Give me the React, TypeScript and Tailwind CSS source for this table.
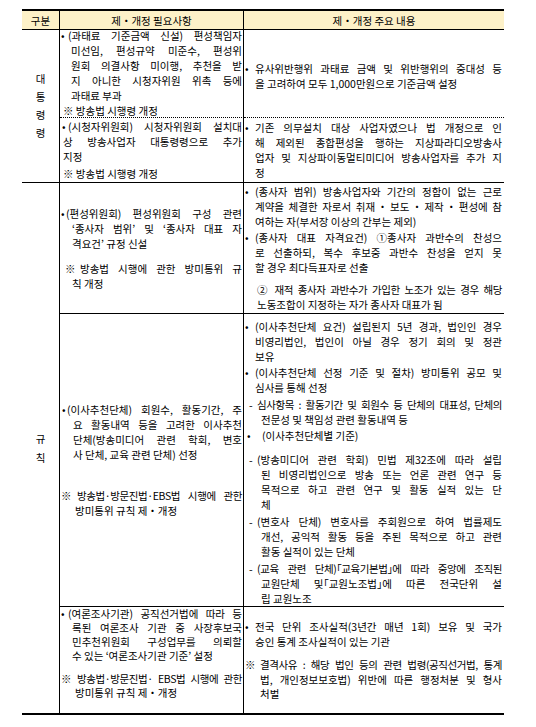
import clsx from "clsx";

type ParaProps = {
  lines: React.ReactNode[];
  mark?: string;
  first?: string;
  markW?: string;
  rest?: string;
  className?: string;
  tight?: number[];
};

// one paragraph, broken into the same lines as the printed table
const Para = ({ lines, mark, first = "", markW = "", rest = "", className = "", tight = [] }: ParaProps) => (
  <div className={className}>
    {lines.map((line, i) => (
      <div
        key={i}
        className={clsx(
          "whitespace-nowrap",
          i < lines.length - 1 && "[text-align-last:justify]",
          i === 0 ? first : rest,
          tight.includes(i) && "tracking-[-0.4px]"
        )}
      >
        {i === 0 && mark && <span className={clsx("inline-block", markW)}>{mark}</span>}
        {line}
      </div>
    ))}
  </div>
);

const Bullet = ({ lines, className, tight }: { lines: React.ReactNode[]; className?: string; tight?: number[] }) => (
  <Para lines={lines} mark="•" markW="w-[10px]" rest="pl-[10px]" className={className} tight={tight} />
);

const Dash = ({ lines, className, tight }: { lines: React.ReactNode[]; className?: string; tight?: number[] }) => (
  <Para lines={lines} mark="-" first="pl-[4px]" markW="w-[8px]" rest="pl-[16px]" className={className} tight={tight} />
);

const App = () => {
  return (
    <div className="min-h-screen bg-white pt-[9px] pl-[22px] text-[10.5px] leading-[15px] text-black font-['Noto_Sans_CJK_KR','Noto_Sans',sans-serif]">
      <div className="grid w-[482px] grid-cols-[38px_184px_260px] grid-rows-[21px_88px_65px_131px_293px_108px]">
        {/* 머리행 */}
        <div className="flex items-center justify-center border-t-2 border-r border-b border-black bg-[#fdf1c8]">구분</div>
        <div className="flex items-center justify-center border-t-2 border-r border-b border-black bg-[#fdf1c8]">제・개정 필요사항</div>
        <div className="flex items-center justify-center border-t-2 border-b border-black bg-[#fdf1c8]">제・개정 주요 내용</div>

        {/* 대통령령 */}
        <div className="row-span-2 flex flex-col items-center justify-center border-r border-b border-black leading-[18px]">
          <span>대</span>
          <span>통</span>
          <span>령</span>
          <span>령</span>
        </div>
        <div className="flex flex-col justify-center border-r border-b border-black [border-bottom-style:dotted]! px-[1px] pb-[2px]">
          <Para
            mark="•"
            markW="w-[7px]"
            rest="pl-[10px]"
            lines={[
              "(과태료 기준금액 신설) 편성책임자",
              "미선임, 편성규약 미준수, 편성위",
              "원회 의결사항 미이행, 추천을 받",
              "지 아니한 시청자위원 위촉 등에",
              "과태료 부과",
            ]}
          />
          <div className="pl-[2px]">※ 방송법 시행령 개정</div>
        </div>
        <div className="flex flex-col justify-center border-b border-black [border-bottom-style:dotted]! pt-[4px] pl-[1px] pr-[2px]">
          <Bullet lines={["유사위반행위 과태료 금액 및 위반행위의 중대성 등", "을 고려하여 모두 1,000만원으로 기준금액 설정"]} />
        </div>

        <div className="flex flex-col justify-center border-r border-b border-black px-[1px]">
          <Para
            mark="•"
            first="pl-[1px]"
            markW="w-[6px]"
            rest="pl-[2px]"
            lines={["(시청자위원회) 시청자위원회 설치대", "상 방송사업자 대통령령으로 추가", "지정"]}
          />
          <div className="mt-[2px] pl-[2px]">※ 방송법 시행령 개정</div>
        </div>
        <div className="flex flex-col justify-center border-b border-black pl-[1px] pr-[2px]">
          <Bullet
            lines={[
              "기존 의무설치 대상 사업자였으나 법 개정으로 인",
              "해 제외된 종합편성을 행하는 지상파라디오방송사",
              "업자 및 지상파이동멀티미디어 방송사업자를 추가 지",
              "정",
            ]}
          />
        </div>

        {/* 규칙 */}
        <div className="row-span-3 flex flex-col items-center justify-center border-r border-b-2 border-black leading-[19px]">
          <span>규</span>
          <span>칙</span>
        </div>
        <div className="flex flex-col justify-center border-r border-b border-black px-[1px]">
          <Para
            mark="•"
            markW="w-[5px]"
            rest="pl-[11px]"
            lines={["(편성위원회) 편성위원회 구성 관련", "‘종사자 범위’ 및 ‘종사자 대표 자", "격요건’ 규정 신설"]}
          />
          <Para
            className="mt-[10px]"
            mark="※"
            first="pl-[4px]"
            markW="w-[15px]"
            rest="pl-[11px]"
            lines={["방송법 시행에 관한 방미통위 규", "칙 개정"]}
          />
        </div>
        <div className="flex flex-col justify-center border-b border-black pl-[1px] pr-[2px]">
          <Bullet
            lines={[
              "(종사자 범위) 방송사업자와 기간의 정함이 없는 근로",
              "계약을 체결한 자로서 취재・보도・제작・편성에 참",
              "여하는 자(부서장 이상의 간부는 제외)",
            ]}
          />
          <Bullet
            className="mt-[1px]"
            lines={[
              <>
                (종사자 대표 자격요건) <span className="inline-block">①종사자</span> 과반수의 찬성으
              </>,
              "로 선출하되, 복수 후보중 과반수 찬성을 얻지 못",
              "할 경우 최다득표자로 선출",
            ]}
          />
          <Para
            className="mt-[7px]"
            first="pl-[12px]"
            rest="pl-[12px]"
            tight={[0]}
            lines={["②  재적 종사자 과반수가 가입한 노조가 있는 경우 해당", "노동조합이 지정하는 자가 종사자 대표가 됨"]}
          />
        </div>

        <div className="flex flex-col justify-center border-r border-b border-black px-[1px]">
          <Para
            mark="•"
            first="pl-[1px]"
            markW="w-[5px]"
            rest="pl-[12px]"
            lines={[
              "(이사추천단체) 회원수, 활동기간, 주",
              "요 활동내역 등을 고려한 이사추천",
              "단체(방송미디어 관련 학회, 변호",
              "사 단체, 교육 관련 단체) 선정",
            ]}
          />
          <Para
            className="mt-[26px]"
            mark="※"
            markW="w-[16px]"
            rest="pl-[14px]"
            tight={[0]}
            lines={["방송법·방문진법·EBS법 시행에 관한", "방미통위 규칙 제・개정"]}
          />
        </div>
        <div className="flex flex-col border-b border-black pt-[5px] pl-[1px] pr-[2px]">
          <Bullet
            lines={[
              "(이사추천단체 요건) 설립된지 5년 경과, 법인인 경우",
              "비영리법인, 법인이 아닐 경우 정기 회의 및 정관",
              "보유",
            ]}
          />
          <Bullet className="mt-[1px]" lines={["(이사추천단체 선정 기준 및 절차) 방미통위 공모 및", "심사를 통해 선정"]} />
          <Dash
            className="mt-[2px]"
            tight={[0]}
            lines={["심사항목 : 활동기간 및 회원수 등 단체의 대표성, 단체의", "전문성 및 책임성 관련 활동내역 등"]}
          />
          <Para className="mt-[1px]" mark="•" first="pl-[2px]" markW="w-[15px]" lines={["(이사추천단체별 기준)"]} />
          <Dash
            className="mt-[9px]"
            lines={[
              "(방송미디어 관련 학회) 민법 제32조에 따라 설립",
              "된 비영리법인으로 방송 또는 언론 관련 연구 등",
              "목적으로 하고 관련 연구 및 활동 실적 있는 단",
              "체",
            ]}
          />
          <Dash
            className="mt-[2px]"
            lines={[
              "(변호사 단체) 변호사를 주회원으로 하여 법률제도",
              "개선, 공익적 활동 등을 주된 목적으로 하고 관련",
              "활동 실적이 있는 단체",
            ]}
          />
          <Dash
            className="mt-[2px]"
            tight={[0]}
            lines={[
              <>
                (교육 관련 단체)<span className="inline-block">｢교육기본법｣에</span> 따라 중앙에 조직된
              </>,
              <>
                교원단체 <span className="inline-block">및｢교원노조법｣에</span> 따른 전국단위 설
              </>,
              "립 교원노조",
            ]}
          />
        </div>

        <div className="flex flex-col border-r border-b-2 border-black px-[1px] leading-[14px]">
          <Para
            mark="•"
            markW="w-[7px]"
            rest="pl-[11px]"
            lines={[
              "(여론조사기관) 공직선거법에 따라 등",
              "록된 여론조사 기관 중 사장후보국",
              "민추천위원회 구성업무를 의뢰할",
              "수 있는 ‘여론조사기관 기준’ 설정",
            ]}
          />
          <Para
            className="mt-[9px]"
            mark="※"
            markW="w-[16px]"
            rest="pl-[14px]"
            tight={[0]}
            lines={["방송법·방문진법· EBS법 시행에 관한", "방미통위 규칙 제・개정"]}
          />
        </div>
        <div className="flex flex-col border-b-2 border-black pt-[13px] pl-[1px] pr-[2px] leading-[14.5px]">
          <Bullet lines={["전국 단위 조사실적(3년간 매년 1회) 보유 및 국가", "승인 통계 조사실적이 있는 기관"]} />
          <Para
            className="mt-[9px]"
            mark="※"
            markW="w-[15px]"
            rest="pl-[15px]"
            tight={[0]}
            lines={["결격사유 : 해당 법인 등의 관련 법령(공직선거법, 통계", "법, 개인정보보호법) 위반에 따른 행정처분 및 형사", "처벌"]}
          />
        </div>
      </div>
    </div>
  );
};

export default App;
